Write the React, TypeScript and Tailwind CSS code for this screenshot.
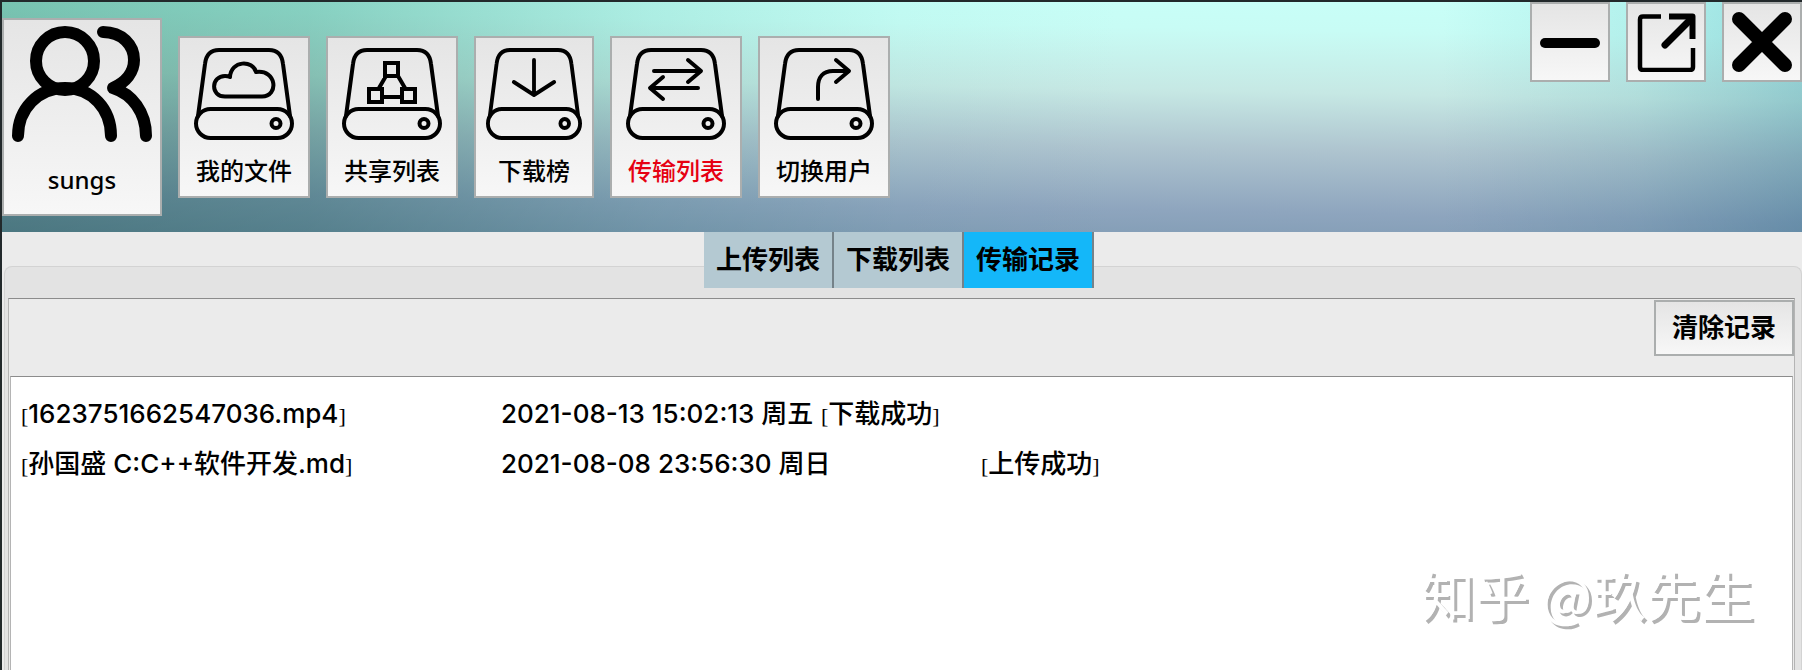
import type { ReactNode } from "react";

const stroke = {
  fill: "none",
  stroke: "#000",
  strokeLinecap: "round" as const,
  strokeLinejoin: "round" as const,
};

function UsersIcon() {
  return (
    <svg viewBox="0 0 140 118" className="h-[118px] w-[140px]" strokeWidth="12" {...stroke} aria-hidden="true">
      <circle cx="53" cy="37" r="29" />
      <path d="M6 112c0-27 20-48 47-48s46 21 46 48" />
      <path d="M91 8c19 0 31 13 31 28 0 12-8 22-21 28 19 6 33 24 33 48" />
    </svg>
  );
}

function DriveIcon({ children, narrow }: { children: ReactNode; narrow?: boolean }) {
  return (
    <svg
      viewBox="0 0 100 92"
      preserveAspectRatio="none"
      className={narrow ? "h-[92px] w-[96px]" : "h-[92px] w-[100px]"}
      strokeWidth="4"
      {...stroke}
      aria-hidden="true"
    >
      <path d="M4 68 11 16C12 7 17 2 25 2H75C83 2 88 7 89 16L96 68" />
      <rect x="2" y="61" width="96" height="29" rx="14.500" />
      <circle cx="82" cy="75.500" r="4.500" />
      {children}
    </svg>
  );
}

const navItems = [
  {
    label: "我的文件",
    icon: (
      <DriveIcon>
        <path d="M31 48.500C16 48.500 17 28 31 28C33 28 35 28.500 36 29C37 12 59 12 62 24C83 21 85 48.500 68 48.500Z" />
      </DriveIcon>
    ),
  },
  {
    label: "共享列表",
    icon: (
      <DriveIcon>
        <g strokeLinejoin="miter">
          <path d="M43 15H56V28H43ZM27 41H40V54H27ZM60 41H73V54H60ZM40 49H60M44 28 37 40M56 28 63 40" />
        </g>
      </DriveIcon>
    ),
  },
  {
    label: "下载榜",
    narrow: true,
    icon: (
      <DriveIcon narrow>
        <path d="M50 12V46M29 34 50 47 71 34" />
      </DriveIcon>
    ),
  },
  {
    label: "传输列表",
    active: true,
    icon: (
      <DriveIcon>
        <path d="M28 23H74M62 12 75 23 62 34M72 40H25M37 29 24 40 37 51" />
      </DriveIcon>
    ),
  },
  {
    label: "切换用户",
    icon: (
      <DriveIcon>
        <path d="M44 51V39C44 29 49 23 59 23H74M62 12 75 23 62 34" />
      </DriveIcon>
    ),
  },
];

const tabs = ["上传列表", "下载列表", "传输记录"];

const records = [
  { file: "1623751662547036.mp4", time: "2021-08-13 15:02:13 周五", status: "下载成功", timeWidth: "min-w-[320px]" },
  { file: "孙国盛 C:C++软件开发.md", time: "2021-08-08 23:56:30 周日", status: "上传成功", timeWidth: "min-w-[480px]" },
];

const raised = "border-2 border-[#abaeae] bg-linear-to-b from-[#e5e5e5] to-[#f7f7f7]";

function Bracketed({ children }: { children: ReactNode }) {
  return (
    <>
      <span className="font-['Liberation_Serif',serif] text-[22px] font-normal">[</span>
      {children}
      <span className="font-['Liberation_Serif',serif] text-[22px] font-normal">]</span>
    </>
  );
}

function WindowButton({ label, children }: { label: string; children: ReactNode }) {
  return (
    <button type="button" aria-label={label} className={`flex size-20 items-center justify-center ${raised}`}>
      <svg viewBox="0 0 60 60" className="size-[60px]" {...stroke} aria-hidden="true">
        {children}
      </svg>
    </button>
  );
}

export default function App() {
  return (
    <div className="flex min-h-screen flex-col border-t-2 border-l-2 border-[#22292b] bg-[#ebebeb] font-['Inter','Noto_Sans_CJK_SC',sans-serif] text-black">
      <header className="flex items-start justify-between bg-[linear-gradient(90deg,#98c5b8_0%,#abd2c8_17%,#dcf0ec_36%,#f6fcfb_50%,#ffffff_62%,#ffffff_80%,#e4f2f4_91%,#bcdce4_100%),linear-gradient(181deg,#c8fff8_0%,#c8fcf5_14%,#c6e8e4_38%,#aec4cf_60%,#8ea5be_84%,#7e9ab2_100%)] bg-blend-multiply">
        <nav className="flex items-center gap-4 pt-4 pb-4" aria-label="主导航">
          <button type="button" className={`flex h-[198px] w-40 flex-col items-center gap-[22px] pt-1 text-2xl font-medium font-['Noto_Sans','Noto_Sans_CJK_SC',sans-serif] ${raised}`}>
            <UsersIcon />
            <span>sungs</span>
          </button>
          {navItems.map((item) => (
            <button
              key={item.label}
              type="button"
              className={`flex h-[162px] flex-col items-center gap-[14px] pt-[10px] text-2xl leading-9 font-medium ${raised} ${item.narrow ? "w-[120px]" : "w-[132px]"} ${item.active ? "text-[#e60012]" : ""}`}
            >
              {item.icon}
              <span>{item.label}</span>
            </button>
          ))}
        </nav>
        <div className="flex gap-4">
          <WindowButton label="最小化">
            <path d="M5 31H55" strokeWidth="10" />
          </WindowButton>
          <WindowButton label="最大化">
            <path d="M25 4.500H7Q4 4.500 4 7.500V55Q4 58 7 58H54Q57 58 57 55V36" strokeWidth="4.500" strokeLinecap="butt" />
            <path d="M33 4.500H56.500V27" strokeWidth="6" strokeLinecap="butt" />
            <path d="M29 33 55 7" strokeWidth="7" />
          </WindowButton>
          <WindowButton label="关闭">
            <path d="M7 7 53 53M53 7 7 53" strokeWidth="14" />
          </WindowButton>
        </div>
      </header>

      <main className="relative flex flex-1 flex-col">
        <div className="flex flex-1 flex-col bg-[#ebebeb] pt-[34px]">
          <section className="ml-[2px] flex flex-1 flex-col rounded-t-lg border border-b-0 border-[#d3d3d3] bg-[#e3e3e3] pt-[31px] pr-[6px] pl-[3px]">
            <div className="flex flex-1 flex-col border border-b-0 border-[#b4b4b4] border-t-[#8c8c8c] bg-[#ebebeb]">
              <div className="flex h-[77px] justify-end pt-px">
                <button type="button" className={`h-14 px-4 text-[26px] leading-none font-semibold ${raised}`}>
                  清除记录
                </button>
              </div>
              <ul className="mx-px flex-1 border border-b-0 border-[#b4b4b4] border-t-[#8c8c8c] bg-white px-[10px] pt-3 text-[26px] leading-[50px] font-medium">
                {records.map((record) => (
                  <li key={record.file} className="flex h-[50px] whitespace-nowrap">
                    <span className="min-w-[480px]">
                      <Bracketed>{record.file}</Bracketed>
                    </span>
                    <span className={record.timeWidth}>{record.time}</span>
                    <span>
                      <Bracketed>{record.status}</Bracketed>
                    </span>
                  </li>
                ))}
              </ul>
            </div>
          </section>
        </div>
        <div className="absolute inset-x-0 top-0 flex justify-center pr-[6px]" role="tablist">
          {tabs.map((tab, index) => (
            <button
              key={tab}
              type="button"
              role="tab"
              aria-selected={index === 2}
              className={`h-14 w-[130px] border-r-2 border-[#758289] text-[26px] leading-none font-semibold whitespace-nowrap ${index === 2 ? "bg-[#14b7f9]" : "bg-[#b4c9d2]"}`}
            >
              {tab}
            </button>
          ))}
        </div>
        <p className="absolute right-12 bottom-10 font-['Noto_Sans_CJK_SC',sans-serif] text-[54px] leading-[72px] text-white [text-shadow:3px_3px_0_#b2b2b2]">
          知乎 @玖先生
        </p>
      </main>
    </div>
  );
}
